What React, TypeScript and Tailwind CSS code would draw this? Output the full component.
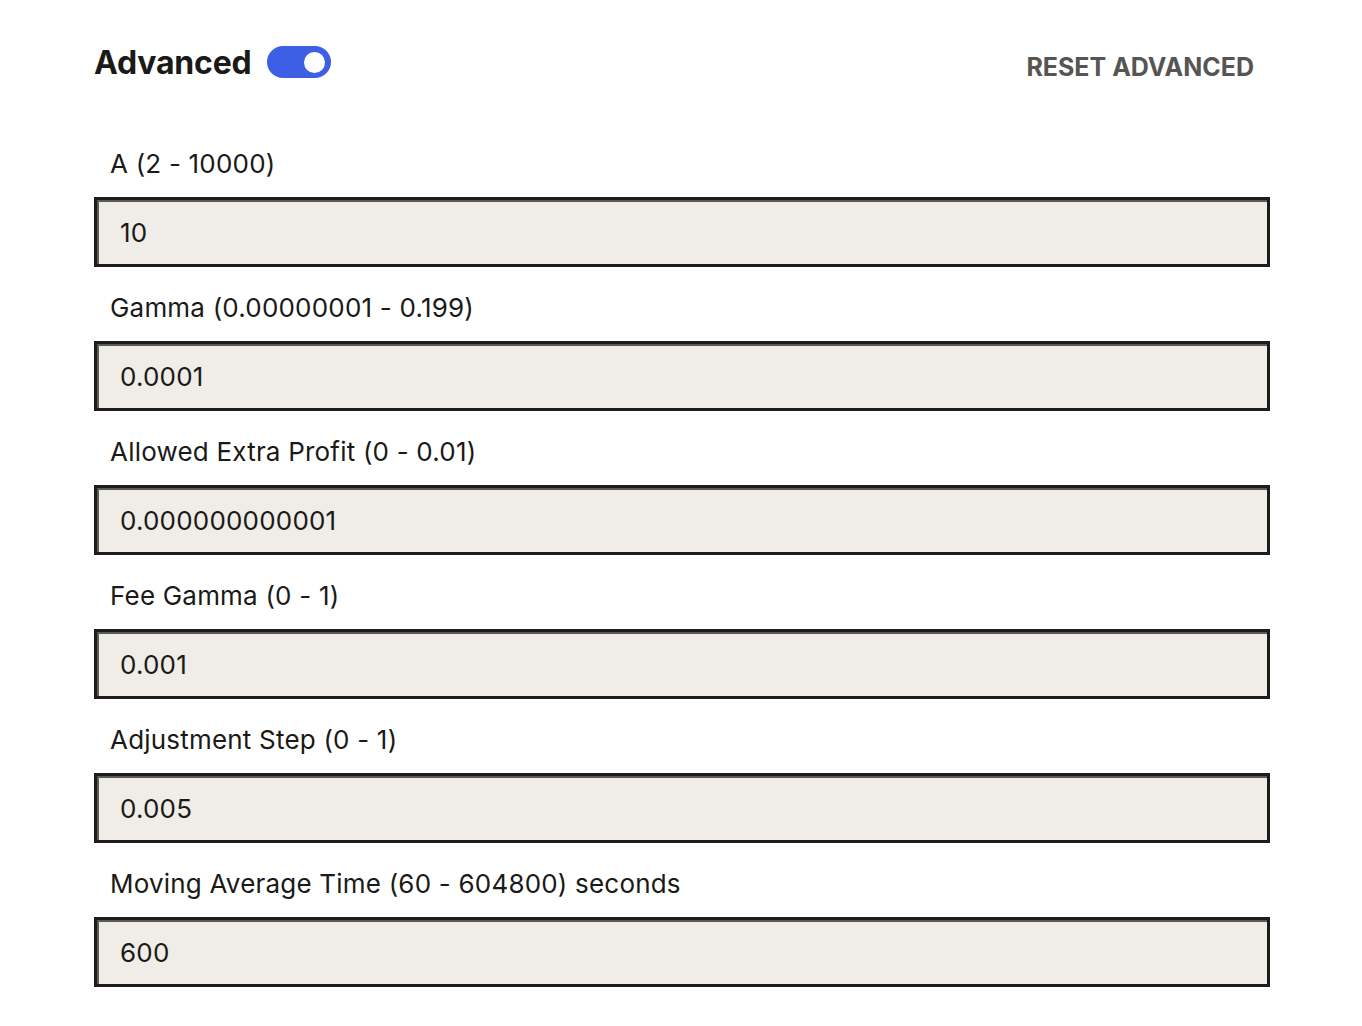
import React from "react";

const fields = [
  { label: "A (2 - 10000)", value: "10" },
  { label: "Gamma (0.00000001 - 0.199)", value: "0.0001" },
  { label: "Allowed Extra Profit (0 - 0.01)", value: "0.000000000001" },
  { label: "Fee Gamma (0 - 1)", value: "0.001" },
  { label: "Adjustment Step (0 - 1)", value: "0.005" },
  { label: "Moving Average Time (60 - 604800) seconds", value: "600" },
];

export default function App() {
  return (
    <div
      className="w-[1362px] h-[1026px] bg-white pl-[94px] pr-[92px] pt-[45px] text-[#1a1a17]"
      style={{ fontFamily: "Inter, 'Liberation Sans', sans-serif" }}
    >
      <div className="flex items-center justify-between h-[34px]">
        <div className="flex items-center gap-[15px]">
          <h2 className="text-[32px] font-bold tracking-[-0.2px] leading-none mt-[2px]">Advanced</h2>
          <div className="w-[64px] h-[32px] rounded-full bg-[#3d5fe6] flex items-center justify-end pr-[6px]">
            <div className="w-[21px] h-[21px] rounded-full bg-white" />
          </div>
        </div>
        <button className="text-[25px] font-bold text-[#555553] mr-[16px] mt-[10px] leading-none">
          RESET ADVANCED
        </button>
      </div>
      <div className="mt-[68px] flex flex-col">
        {fields.map((f) => (
          <div key={f.label} className="flex flex-col">
            <label className="pl-[16px] text-[26px] leading-[34px] h-[34px] tracking-[0.2px]">{f.label}</label>
            <div className="mt-[16px] h-[70px] border-[3px] border-[#1c1c18] bg-[#f0ece8] shadow-[inset_2px_2px_0_#5c5a55] flex items-center pl-[23px] text-[26px] tracking-[0.2px]">
              {f.value}
            </div>
            <div className="h-[24px]" />
          </div>
        ))}
      </div>
    </div>
  );
}
